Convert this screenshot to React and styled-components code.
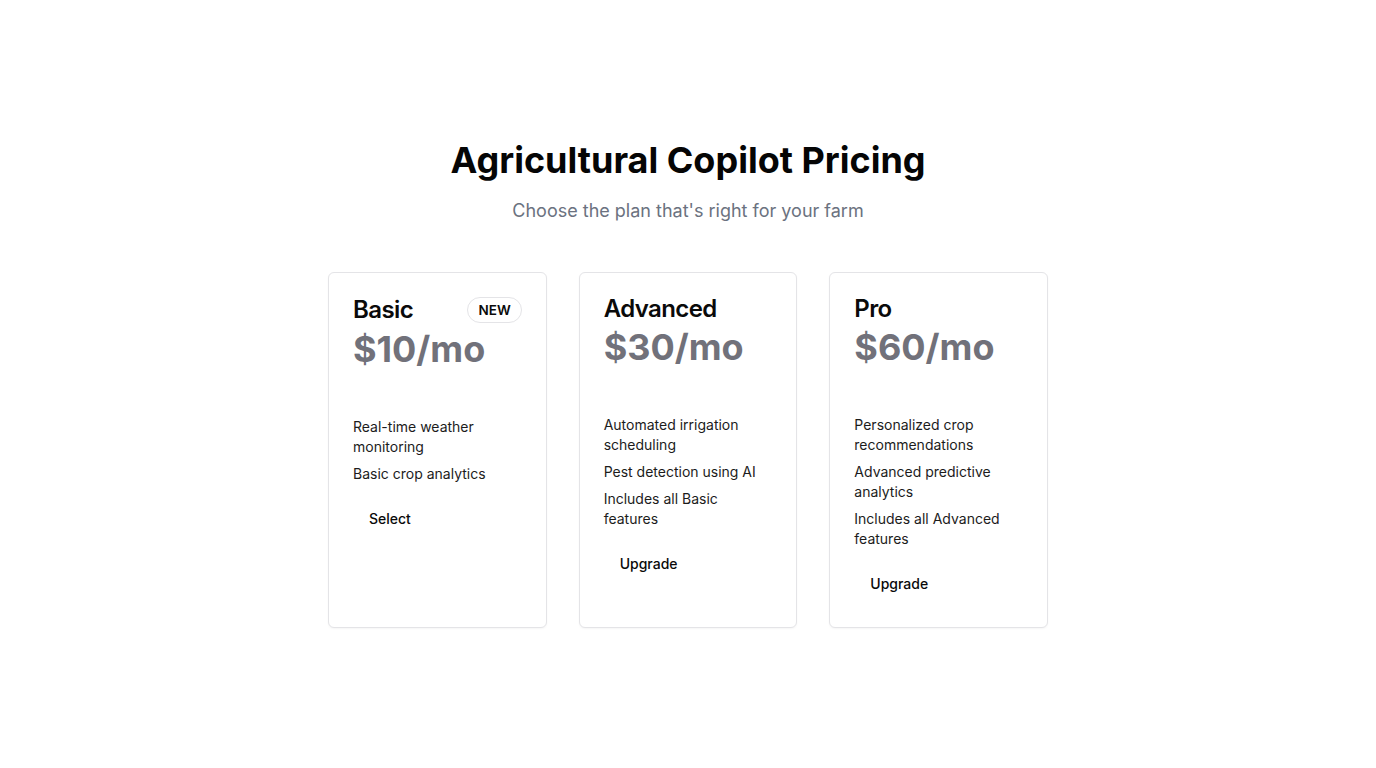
import React from 'react'
import styled, { createGlobalStyle } from 'styled-components'

const GlobalStyle = createGlobalStyle`
  * { box-sizing: border-box; }
  body {
    margin: 0;
    background: #ffffff;
    font-family: Inter, "Noto Sans", sans-serif;
    color: #0a0a0a;
  }
`

const Page = styled.main`
  min-height: 100vh;
  display: flex;
  flex-direction: column;
  align-items: center;
  justify-content: center;
`

const Heading = styled.h1`
  margin: 0;
  font-size: 36px;
  line-height: 41px;
  font-weight: 700;
  color: #050505;
`

const Subtitle = styled.p`
  margin: 16px 0 47px;
  font-size: 18px;
  line-height: 28px;
  color: #6b7280;
`

const Grid = styled.div`
  width: 720px;
  display: grid;
  grid-template-columns: repeat(3, 1fr);
  gap: 32px;
`

const Card = styled.div`
  border: 1px solid #e4e4e7;
  border-radius: 6px;
  background: #fff;
  padding: 24px;
  box-shadow: 0 1px 2px rgba(0, 0, 0, 0.04);
  display: flex;
  flex-direction: column;
`

const TitleRow = styled.div`
  display: flex;
  align-items: center;
  justify-content: space-between;
`

const Title = styled.h3`
  margin: 0;
  font-size: 24px;
  line-height: 24px;
  font-weight: 600;
  letter-spacing: -0.6px;
`

const Badge = styled.span`
  height: 26px;
  padding: 0 10px;
  display: inline-flex;
  align-items: center;
  border: 1px solid #e4e4e7;
  border-radius: 999px;
  font-size: 13.5px;
  font-weight: 600;
  color: #0a0a0a;
`

const Price = styled.div`
  margin-top: 8px;
  font-size: 36px;
  line-height: 36px;
  font-weight: 700;
  color: #71717a;
`

const Features = styled.ul`
  list-style: none;
  margin: 50px 0 0;
  padding: 0;
  display: flex;
  flex-direction: column;
  gap: 7px;
`

const Feature = styled.li`
  font-size: 14px;
  line-height: 20px;
  color: #1c1c1c;
`

const Action = styled.button`
  align-self: flex-start;
  margin-top: 14px;
  height: 40px;
  padding: 0 16px;
  border: none;
  background: transparent;
  border-radius: 6px;
  font-family: inherit;
  font-size: 14px;
  font-weight: 500;
  color: #0a0a0a;
  cursor: pointer;
`

const plans = [
  { name: 'Basic', price: '$10/mo', badge: 'NEW', action: 'Select',
    features: ['Real-time weather monitoring', 'Basic crop analytics'] },
  { name: 'Advanced', price: '$30/mo', action: 'Upgrade',
    features: ['Automated irrigation scheduling', 'Pest detection using AI', 'Includes all Basic features'] },
  { name: 'Pro', price: '$60/mo', action: 'Upgrade',
    features: ['Personalized crop recommendations', 'Advanced predictive analytics', 'Includes all Advanced features'] },
]

const App = () => {
  return (
    <>
      <GlobalStyle />
      <Page>
        <Heading>Agricultural Copilot Pricing</Heading>
        <Subtitle>Choose the plan that's right for your farm</Subtitle>
        <Grid>
          {plans.map(plan => (
            <Card key={plan.name}>
              <TitleRow>
                <Title>{plan.name}</Title>
                {plan.badge && <Badge>{plan.badge}</Badge>}
              </TitleRow>
              <Price>{plan.price}</Price>
              <Features>
                {plan.features.map(f => <Feature key={f}>{f}</Feature>)}
              </Features>
              <Action>{plan.action}</Action>
            </Card>
          ))}
        </Grid>
      </Page>
    </>
  )
}

export default App
